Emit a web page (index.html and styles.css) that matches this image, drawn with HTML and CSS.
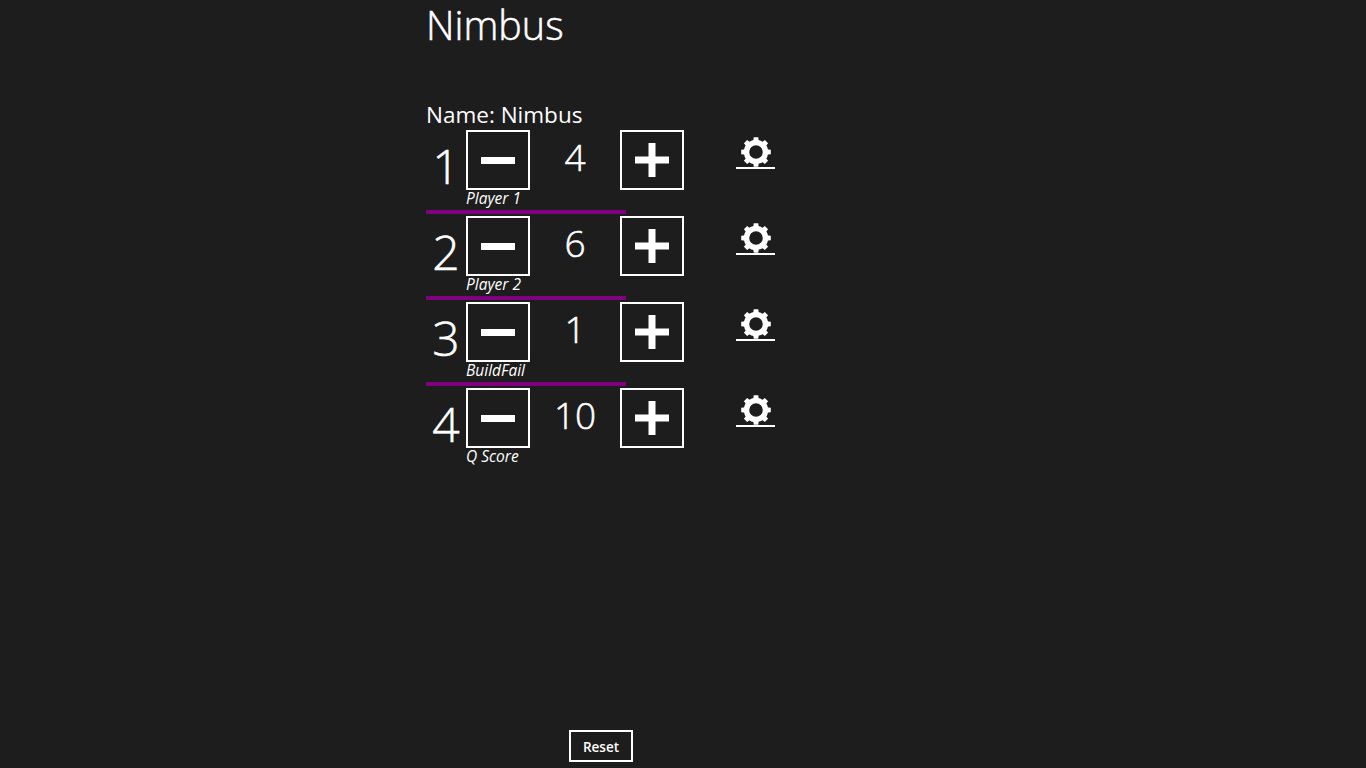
FILE: index.html
```html
<!DOCTYPE html>
<html lang="en">
<head>
<meta charset="utf-8">
<title>Nimbus</title>
<link rel="stylesheet" href="styles.css">
</head>
<body>
<svg class="defs" width="0" height="0" aria-hidden="true">
  <defs>
    <symbol id="gear" viewBox="0 0 32 32">
      <circle cx="16" cy="16" r="9.500" fill="none" stroke="#fff" stroke-width="5.400"/>
      <g fill="#fff">
        <path d="M13.200 6 13.700 1.200h4.600L18.800 6z"/>
        <path d="M13.200 6 13.700 1.200h4.600L18.800 6z" transform="rotate(45 16 16)"/>
        <path d="M13.200 6 13.700 1.200h4.600L18.800 6z" transform="rotate(90 16 16)"/>
        <path d="M13.200 6 13.700 1.200h4.600L18.800 6z" transform="rotate(135 16 16)"/>
        <path d="M13.200 6 13.700 1.200h4.600L18.800 6z" transform="rotate(180 16 16)"/>
        <path d="M13.200 6 13.700 1.200h4.600L18.800 6z" transform="rotate(225 16 16)"/>
        <path d="M13.200 6 13.700 1.200h4.600L18.800 6z" transform="rotate(270 16 16)"/>
        <path d="M13.200 6 13.700 1.200h4.600L18.800 6z" transform="rotate(315 16 16)"/>
      </g>
    </symbol>
    <symbol id="minus" viewBox="0 0 34 7"><rect width="34" height="7" fill="#fff"/></symbol>
    <symbol id="plus" viewBox="0 0 34 34"><path d="M13.500 0h7v13.500H34v7H20.500V34h-7V20.500H0v-7h13.500z" fill="#fff"/></symbol>
  </defs>
</svg>
<main class="page">
  <h1 class="title">Nimbus</h1>
  <p class="name">Name: Nimbus</p>
  <section class="players">
    <article class="player">
      <div class="rank">1</div>
      <button class="step"><svg class="minus"><use href="#minus"/></svg></button>
      <div class="score">4</div>
      <button class="step"><svg class="plus"><use href="#plus"/></svg></button>
      <a class="settings"><svg class="gear"><use href="#gear"/></svg></a>
      <div class="player-name">Player 1</div>
    </article>
    <article class="player">
      <div class="rank">2</div>
      <button class="step"><svg class="minus"><use href="#minus"/></svg></button>
      <div class="score">6</div>
      <button class="step"><svg class="plus"><use href="#plus"/></svg></button>
      <a class="settings"><svg class="gear"><use href="#gear"/></svg></a>
      <div class="player-name">Player 2</div>
    </article>
    <article class="player">
      <div class="rank">3</div>
      <button class="step"><svg class="minus"><use href="#minus"/></svg></button>
      <div class="score">1</div>
      <button class="step"><svg class="plus"><use href="#plus"/></svg></button>
      <a class="settings"><svg class="gear"><use href="#gear"/></svg></a>
      <div class="player-name">BuildFail</div>
    </article>
    <article class="player">
      <div class="rank">4</div>
      <button class="step"><svg class="minus"><use href="#minus"/></svg></button>
      <div class="score">10</div>
      <button class="step"><svg class="plus"><use href="#plus"/></svg></button>
      <a class="settings"><svg class="gear"><use href="#gear"/></svg></a>
      <div class="player-name">Q Score</div>
    </article>
  </section>
  <button class="reset">Reset</button>
</main>
</body>
</html>
```
FILE: styles.css
```css
* { box-sizing: border-box; }
html, body { margin: 0; height: 100%; }
body {
  background: #1d1d1d;
  color: #fff;
  font-family: "Open Sans", "Noto Sans", sans-serif;
  overflow: hidden;
}
.defs { display: block; height: 0; }
.page {
  height: 768px;
  padding-left: 426px;
  display: flex;
  flex-direction: column;
  align-items: flex-start;
}
.title {
  margin: 0;
  height: 100px;
  font-size: 39.500px;
  font-weight: 300;
  line-height: 51px;
  -webkit-text-stroke: 0.5px #fff;
}
.name {
  margin: 0;
  height: 30px;
  font-size: 22.500px;
  line-height: 29px;
}
.players { display: flex; flex-direction: column; }
.player {
  display: grid;
  grid-template-columns: 40px 64px 90px 64px 52px 40px;
  grid-template-rows: 60px 20px 4px;
  width: 350px;
  height: 86px;
}
.player:not(:last-child)::after {
  content: "";
  grid-column: 1 / -1;
  width: 200px;
  height: 4px;
  background: #800080;
}
.rank {
  font-size: 48px;
  font-weight: 300;
  line-height: 72px;
  text-align: center;
  -webkit-text-stroke: 0.5px #fff;
}
.score {
  font-size: 37px;
  font-weight: 300;
  line-height: 54px;
  text-align: center;
  -webkit-text-stroke: 0.5px #fff;
}
.step {
  width: 64px;
  height: 60px;
  padding: 0;
  background: none;
  border: 2px solid #fff;
  display: flex;
  align-items: center;
  justify-content: center;
}
.minus { width: 34px; height: 7px; }
.plus { width: 34px; height: 34px; }
.settings {
  grid-column: 6;
  width: 39px;
  height: 39px;
  border-bottom: 2px solid #fff;
  display: flex;
  justify-content: center;
  padding-top: 6px;
}
.gear { width: 32px; height: 32px; }
.player-name {
  grid-column: 2 / 5;
  grid-row: 2;
  font-size: 15.500px;
  font-style: italic;
  font-weight: 400;
  line-height: 16px;
}
.reset {
  margin-top: auto;
  margin-bottom: 6px;
  margin-left: 143px;
  width: 64px;
  height: 32px;
  padding: 2px 0 0;
  background: none;
  border: 2px solid #fff;
  color: #fff;
  font-family: inherit;
  font-size: 13.500px;
  font-weight: 600;
}
```
